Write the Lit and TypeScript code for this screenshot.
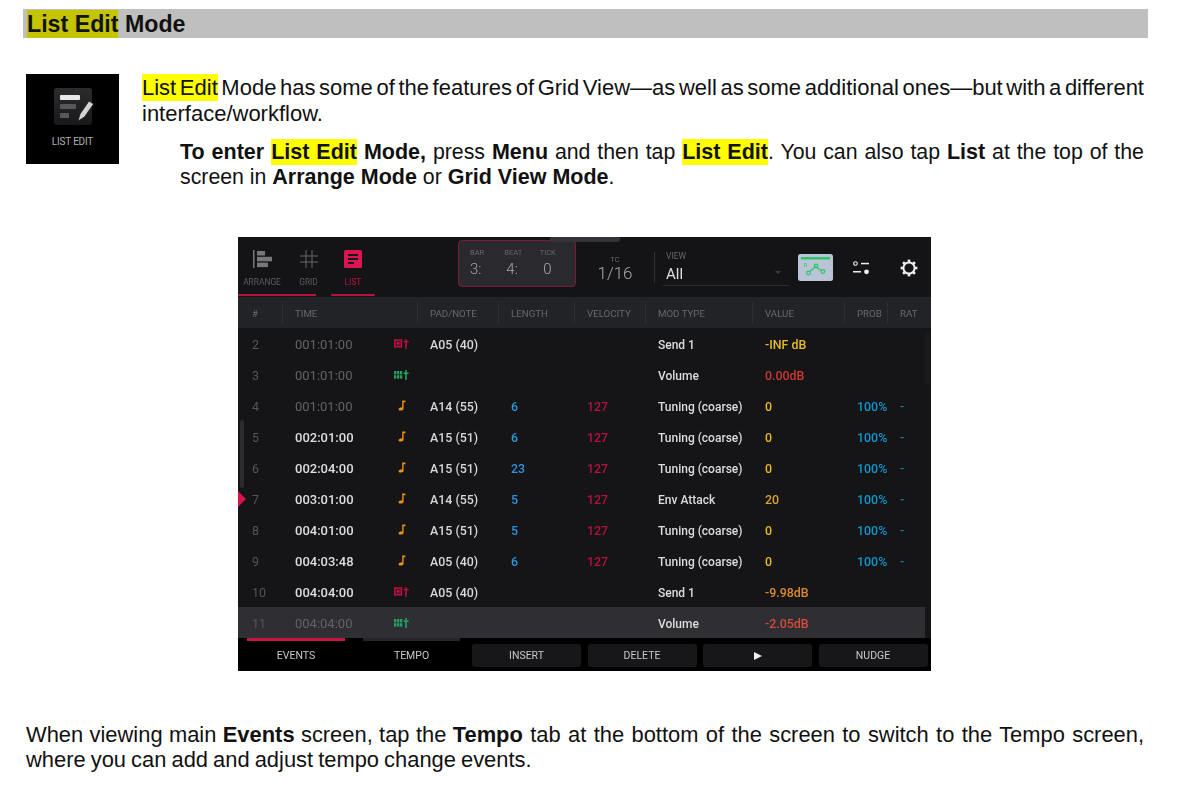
import { LitElement, html, svg, css } from "lit";
import { customElement } from "lit/decorators.js";

const padIcon = html`<svg class="ev" width="15" height="10" viewBox="0 0 15 10"><rect x="0.8" y="1" width="6.6" height="6.8" fill="#4a1024" stroke="#b5123f" stroke-width="1.6"/><rect x="2.9" y="3.2" width="2.4" height="2.4" fill="#d01848"/><path d="M12 10V2" stroke="#b5123f" stroke-width="1.6" fill="none"/><path d="M9.6 2.6H14.6" stroke="#b5123f" stroke-width="1.6" fill="none"/><path d="M10.6 1.4 12 0 13.4 1.4z" fill="#b5123f"/></svg>`;
const gridIcon = html`<svg class="ev" width="15" height="10" viewBox="0 0 15 10"><g fill="#22a262"><rect x="0" y="1" width="2.3" height="3.4"/><rect x="3" y="1" width="2.3" height="3.4"/><rect x="6" y="1" width="2.3" height="3.4"/><rect x="0" y="5.2" width="2.3" height="3.4"/><rect x="3" y="5.2" width="2.3" height="3.4"/><rect x="6" y="5.2" width="2.3" height="3.4"/><rect x="11.2" y="0" width="1.6" height="10"/><rect x="9.6" y="2.4" width="5" height="1.6"/></g></svg>`;
const noteIcon = html`<svg class="ev note" width="8" height="11" viewBox="0 0 8 11"><path d="M4.2 0.5H7.4V2.2H5.6V8.4C5.6 9.8 4.2 10.6 2.6 10.6 1.2 10.6 0.4 9.9 0.6 9 0.8 8 2.2 7.2 4.2 7.6z" fill="#f0900f"/></svg>`;

type Row = { n: string; t: string; bright?: boolean; i: "pad" | "grid" | "note"; p?: string; l?: string; v?: string; m: string; val: string; c: string; pr?: boolean; sel?: boolean };
const rows: Row[] = [
  { n: "2", t: "001:01:00", i: "pad", p: "A05 (40)", m: "Send 1", val: "-INF dB", c: "yel" },
  { n: "3", t: "001:01:00", i: "grid", m: "Volume", val: "0.00dB", c: "red" },
  { n: "4", t: "001:01:00", i: "note", p: "A14 (55)", l: "6", v: "127", m: "Tuning (coarse)", val: "0", c: "yel", pr: true },
  { n: "5", t: "002:01:00", bright: true, i: "note", p: "A15 (51)", l: "6", v: "127", m: "Tuning (coarse)", val: "0", c: "yel", pr: true },
  { n: "6", t: "002:04:00", bright: true, i: "note", p: "A15 (51)", l: "23", v: "127", m: "Tuning (coarse)", val: "0", c: "yel", pr: true },
  { n: "7", t: "003:01:00", bright: true, i: "note", p: "A14 (55)", l: "5", v: "127", m: "Env Attack", val: "20", c: "amb", pr: true },
  { n: "8", t: "004:01:00", bright: true, i: "note", p: "A15 (51)", l: "5", v: "127", m: "Tuning (coarse)", val: "0", c: "yel", pr: true },
  { n: "9", t: "004:03:48", bright: true, i: "note", p: "A05 (40)", l: "6", v: "127", m: "Tuning (coarse)", val: "0", c: "yel", pr: true },
  { n: "10", t: "004:04:00", bright: true, i: "pad", p: "A05 (40)", m: "Send 1", val: "-9.98dB", c: "org" },
  { n: "11", t: "004:04:00", i: "grid", m: "Volume", val: "-2.05dB", c: "ora", sel: true },
];
const teeth = [0, 45, 90, 135, 180, 225, 270, 315];

@customElement("app-root")
export class AppRoot extends LitElement {
  static styles = css`
    :host { display: block; background: #fff; height: 800px; overflow: hidden; font-family: "Liberation Sans", Arial, sans-serif; color: #111; padding-top: 9px; box-sizing: border-box; }
    mark { background: #ffff00; color: inherit; padding: 1px 0; }
    .head { margin: 0 47px 0 23px; height: 29px; background: #bfbfbf; font-size: 23.2px; font-weight: 700; line-height: 31px; padding-left: 4px; }
    .head mark { background: #c4c400; padding: 1px 0; }
    .intro { display: flex; gap: 23px; margin: 36px 51px 0 26px; }
    .tile { width: 93px; height: 90px; background: #000; flex: none; display: flex; flex-direction: column; align-items: center; padding-top: 14px; box-sizing: border-box; }
    .tile svg { overflow: visible; }
    .tile .lbl { font: 10px "Roboto", sans-serif; color: #b0b0b0; margin-top: 11px; letter-spacing: -0.2px; }
    .copy { flex: 1; padding-top: 1px; font-size: 21.3px; }
    p { margin: 0; text-align: justify; }
    .first { font-size: 22px; line-height: 26px; word-spacing: -2.6px; }
    .copy .in { margin: 13px 0 0 38px; line-height: 25px; }
    .in b { font-size: 21.5px; }
    .screen { margin: 47px 0 0 238px; width: 693px; height: 434px; background: #151517; position: relative; font-family: "Roboto", sans-serif; overflow: hidden; filter: blur(0.4px); display: flex; flex-direction: column; color: #ddd; }
    .top { height: 60px; flex: none; background: #141416; display: flex; }
    .nav { width: 137px; flex: none; }
    .tabs { display: flex; height: 57px; }
    .tab { display: flex; flex-direction: column; align-items: center; padding-top: 13px; box-sizing: border-box; font-size: 8.4px; color: #5c5c60; }
    .tab span { margin-top: 9px; line-height: 10px; }
    .tab.a { width: 48px; }
    .tab.a svg { margin-left: 2px; }
    .tab.g { width: 45px; }
    .tab.l { width: 44px; color: #b8123f; }
    .lines { display: flex; gap: 15px; }
    .lines i { height: 2px; width: 78px; background: #b5123f; display: block; }
    .lines i + i { width: 44px; border-radius: 1px; }
    .trans { margin: 3px 0 0 83px; width: 118px; height: 47px; box-sizing: border-box; background: #2a2a2e; border: 1px solid #7d1a35; border-radius: 4px; display: flex; padding-left: 11px; }
    .tc { width: 36px; display: flex; flex-direction: column; align-items: flex-start; font-size: 7.5px; color: #66666b; padding-top: 7px; box-sizing: border-box; line-height: 9px; }
    .tc + .tc { width: 37px; }
    .tc b { font-weight: 300; font-size: 15px; color: #a8a8ac; line-height: 18px; margin-top: 3px; }
    .tc .ind { padding-left: 2px; }
    .tempo { width: 78px; display: flex; flex-direction: column; align-items: center; padding-top: 18px; box-sizing: border-box; font-size: 7.5px; color: #66666b; line-height: 9px; }
    .tempo b { font-weight: 300; font-size: 17px; color: #a8a8ac; line-height: 20px; margin-top: -1px; }
    .sep { width: 1px; height: 30px; margin-top: 15px; background: #333338; flex: none; }
    .view { width: 126px; margin-left: 8px; height: 49px; border-bottom: 1px solid #2c2c30; flex: none; position: relative; padding: 14px 0 0 3px; box-sizing: border-box; font-size: 8.5px; color: #66666b; line-height: 10px; }
    .view b { display: block; font-weight: 400; font-size: 15px; color: #e0e0e0; line-height: 20px; margin-top: 3px; }
    .view u { position: absolute; right: 8px; top: 34px; width: 0; height: 0; border: 3px solid transparent; border-top: 3px solid #3c3c40; border-bottom: 0; }
    .auto { margin: 17px 0 0 9px; flex: none; }
    .ctl { margin: 24px 0 0 20px; flex: none; }
    .gear { margin: 22px 0 0 31px; flex: none; }
    .notch { position: absolute; left: 312px; top: 0; width: 70px; height: 5px; background: #343438; border-radius: 0 0 3px 3px; }
    .gridrow { display: grid; grid-template-columns: 44px 100px 35px 81px 76px 71px 107px 92px 43px 1fr; align-items: center; }
    .hdr { height: 31px; flex: none; background: #222327; font-size: 9.7px; color: #68686e; }
    .hdr > div { padding: 1px 0 0 12px; height: 21px; line-height: 21px; border-left: 1px solid #2d2e33; box-sizing: border-box; white-space: nowrap; }
    .hdr > div:first-child { padding-left: 14px; border-left: 0; }
    .hdr > div.join { border-left: 0; }
    .rows { flex: 1; width: 687px; }
    .row { height: 31px; font-size: 12.4px; font-weight: 500; }
    .row > div { padding-left: 13px; line-height: 33px; height: 31px; white-space: nowrap; box-sizing: border-box; }
    .row > div:first-child { padding-left: 14px; color: #56565a; font-weight: 400; }
    .row.sel { background: #2e2e33; }
    .t { color: #636367; font-size: 13px; font-weight: 400; }
    .t.on { color: #dedede; font-weight: 500; }
    .row > .evc { padding-left: 12px; display: flex; align-items: center; height: 31px; }
    .ev.note { margin-left: 4px; }
    .pad { color: #d8d8d8; }
    .len { color: #2b95de; }
    .vel { color: #b5123f; }
    .row > .mod { color: #dcdcdc; font-size: 12px; line-height: 34px; }
    .yel { color: #e8bb20; }
    .amb { color: #dfa02e; }
    .org { color: #dc8a2e; }
    .red { color: #cc3a30; }
    .ora { color: #d44c38; }
    .pr { color: #0f98cf; }
    .rat { color: #0f7fa8; }
    .bot { height: 33px; flex: none; background: #000; display: flex; }
    .bt { font-size: 10.5px; color: #c8c8c8; text-align: center; }
    .bt.ev1 { width: 98px; margin-left: 9px; border-top: 3px solid #c5143f; border-radius: 0 0 3px 3px; line-height: 29px; box-sizing: border-box; height: 33px; }
    .bt.ev2 { width: 97px; margin-left: 18px; border-top: 3px solid #26262a; border-radius: 0 0 3px 3px; line-height: 29px; box-sizing: border-box; height: 33px; margin-right: 12px; }
    .btns { display: flex; gap: 6.5px; padding-top: 6px; }
    .bb { width: 109px; height: 23px; background: #17171a; border-radius: 3px; font-size: 10.5px; color: #c8c8c8; text-align: center; line-height: 23px; }
    .bb svg { vertical-align: -1px; }
    .thumb { position: absolute; left: 2px; top: 183px; width: 4px; height: 68px; background: #2c2c30; border-radius: 2px; }
    .thumb2 { position: absolute; right: 1px; top: 96px; width: 5px; height: 52px; background: #1a1a1d; }
    .play { position: absolute; left: 0; top: 254px; width: 0; height: 0; border-left: 8px solid #d8144a; border-top: 8px solid transparent; border-bottom: 8px solid transparent; }
    .final { margin: 51px 51px 0 26px; font-size: 21.9px; line-height: 25px; word-spacing: -1px; }
    .final .tight { word-spacing: -2px; }
  `;

  render() {
    return html`
      <div class="head"><mark>List Edit</mark> Mode</div>
      <div class="intro">
        <div class="tile">
          <svg width="38" height="37" viewBox="0 0 38 37">
            <defs><linearGradient id="tg" x1="0" y1="0" x2="0" y2="1"><stop offset="0" stop-color="#2c2c2e"/><stop offset="1" stop-color="#18181a"/></linearGradient></defs>
            <rect width="38" height="37" rx="3" fill="url(#tg)"/>
            <rect x="6" y="7" width="20" height="5" rx="1" fill="#e8e8e8"/>
            <rect x="6" y="16" width="16" height="5" rx="1" fill="#58585a"/>
            <rect x="6" y="25" width="9" height="5" rx="1" fill="#58585a"/>
            <path d="M24 33 26 26 35 13 39.5 16 30.5 29z" fill="#d4d4d4" stroke="#1e1e20" stroke-width="0.8"/>
          </svg>
          <div class="lbl">LIST EDIT</div>
        </div>
        <div class="copy">
          <p class="first"><mark>List Edit</mark> Mode has some of the features of Grid View—as well as some additional ones—but with a different interface/workflow.</p>
          <p class="in"><b>To enter <mark>List Edit</mark> Mode,</b> press <b>Menu</b> and then tap <b><mark>List Edit</mark></b>. You can also tap <b>List</b> at the top of the screen in <b>Arrange Mode</b> or <b>Grid View Mode</b>.</p>
        </div>
      </div>
      <div class="screen">
        <div class="top">
          <div class="nav">
            <div class="tabs">
              <div class="tab a">
                <svg width="20" height="18" viewBox="0 0 20 18"><rect x="0" y="0" width="1.5" height="18" fill="#77777a"/><rect x="4" y="1" width="8" height="4.5" fill="#77777a"/><rect x="4" y="6.8" width="15" height="4.5" fill="#77777a"/><rect x="4" y="12.6" width="11" height="4.5" fill="#77777a"/></svg>
                <span>ARRANGE</span>
              </div>
              <div class="tab g">
                <svg width="18" height="18" viewBox="0 0 18 18"><path d="M6 0V18M12 0V18M0 6H18M0 12H18" stroke="#66666a" stroke-width="1" fill="none"/></svg>
                <span>GRID</span>
              </div>
              <div class="tab l">
                <svg width="18" height="18" viewBox="0 0 18 18"><rect width="18" height="18" rx="1.5" fill="#dc1450"/><rect x="4" y="4" width="10" height="2" fill="#1a1a1c"/><rect x="4" y="8" width="10" height="2" fill="#1a1a1c"/><rect x="4" y="12" width="6" height="2" fill="#1a1a1c"/></svg>
                <span>LIST</span>
              </div>
            </div>
            <div class="lines"><i></i><i></i></div>
          </div>
          <div class="trans">
            <div class="tc">BAR<b>3:</b></div>
            <div class="tc">BEAT<b class="ind">4:</b></div>
            <div class="tc">TICK<b>&nbsp;0</b></div>
          </div>
          <div class="tempo">TC<b>1/16</b></div>
          <div class="sep"></div>
          <div class="view">VIEW<b>All</b><u></u></div>
          <svg class="auto" width="35" height="27" viewBox="0 0 35 27"><rect width="35" height="27" rx="2.5" fill="#b9c4d6"/><rect x="3" y="3" width="29" height="2.5" fill="#2fc46a"/><g fill="none" stroke="#2fc46a" stroke-width="1.2"><path d="M11.5 18 17.5 12.5 23 16.5"/><circle cx="10.5" cy="19" r="1.8"/><circle cx="18" cy="12" r="1.8"/><circle cx="25" cy="17.5" r="1.8"/></g><text x="6" y="13" font-size="5" fill="#2fc46a" font-family="Roboto">R</text></svg>
          <svg class="ctl" width="16" height="14" viewBox="0 0 16 14"><circle cx="2.5" cy="2.5" r="1.8" fill="none" stroke="#eee" stroke-width="1.1"/><rect x="8" y="1.8" width="8" height="1.5" fill="#eee"/><rect x="0" y="10" width="8" height="1.5" fill="#eee"/><circle cx="13.5" cy="10.8" r="2.4" fill="#eee"/></svg>
          <svg class="gear" width="18" height="18" viewBox="0 0 18 18"><circle cx="9" cy="9" r="5.6" fill="none" stroke="#eee" stroke-width="2"/>${teeth.map((a) => svg`<rect x="7.7" y="0.6" width="2.6" height="3" fill="#eee" transform="rotate(${a} 9 9)"/>`)}</svg>
        </div>
        <div class="notch"></div>
        <div class="gridrow hdr">
          <div>#</div><div>TIME</div><div class="join"></div><div>PAD/NOTE</div><div>LENGTH</div><div>VELOCITY</div><div>MOD TYPE</div><div>VALUE</div><div>PROB</div><div>RAT</div>
        </div>
        <div class="rows">
          ${rows.map((r) => html`
            <div class="gridrow row ${r.sel ? "sel" : ""}">
              <div>${r.n}</div>
              <div class="t ${r.bright ? "on" : ""}">${r.t}</div>
              <div class="evc">${r.i === "pad" ? padIcon : r.i === "grid" ? gridIcon : noteIcon}</div>
              <div class="pad">${r.p ?? ""}</div>
              <div class="len">${r.l ?? ""}</div>
              <div class="vel">${r.v ?? ""}</div>
              <div class="mod">${r.m}</div>
              <div class="${r.c}">${r.val}</div>
              <div class="pr">${r.pr ? "100%" : ""}</div>
              <div class="rat">${r.pr ? "-" : ""}</div>
            </div>`)}
        </div>
        <div class="bot">
          <div class="bt ev1">EVENTS</div>
          <div class="bt ev2">TEMPO</div>
          <div class="btns">
            <div class="bb">INSERT</div>
            <div class="bb">DELETE</div>
            <div class="bb"><svg width="8" height="8" viewBox="0 0 8 8"><path d="M0 0 8 4 0 8z" fill="#eee"/></svg></div>
            <div class="bb">NUDGE</div>
          </div>
        </div>
        <div class="thumb"></div>
        <div class="thumb2"></div>
        <div class="play"></div>
      </div>
      <p class="final"><span class="tight">When viewing main <b>Events</b> screen, tap the </span><b>Tempo</b> tab at the bottom of the screen to switch to the Tempo screen, where you can add and adjust tempo change events.</p>
    `;
  }
}
